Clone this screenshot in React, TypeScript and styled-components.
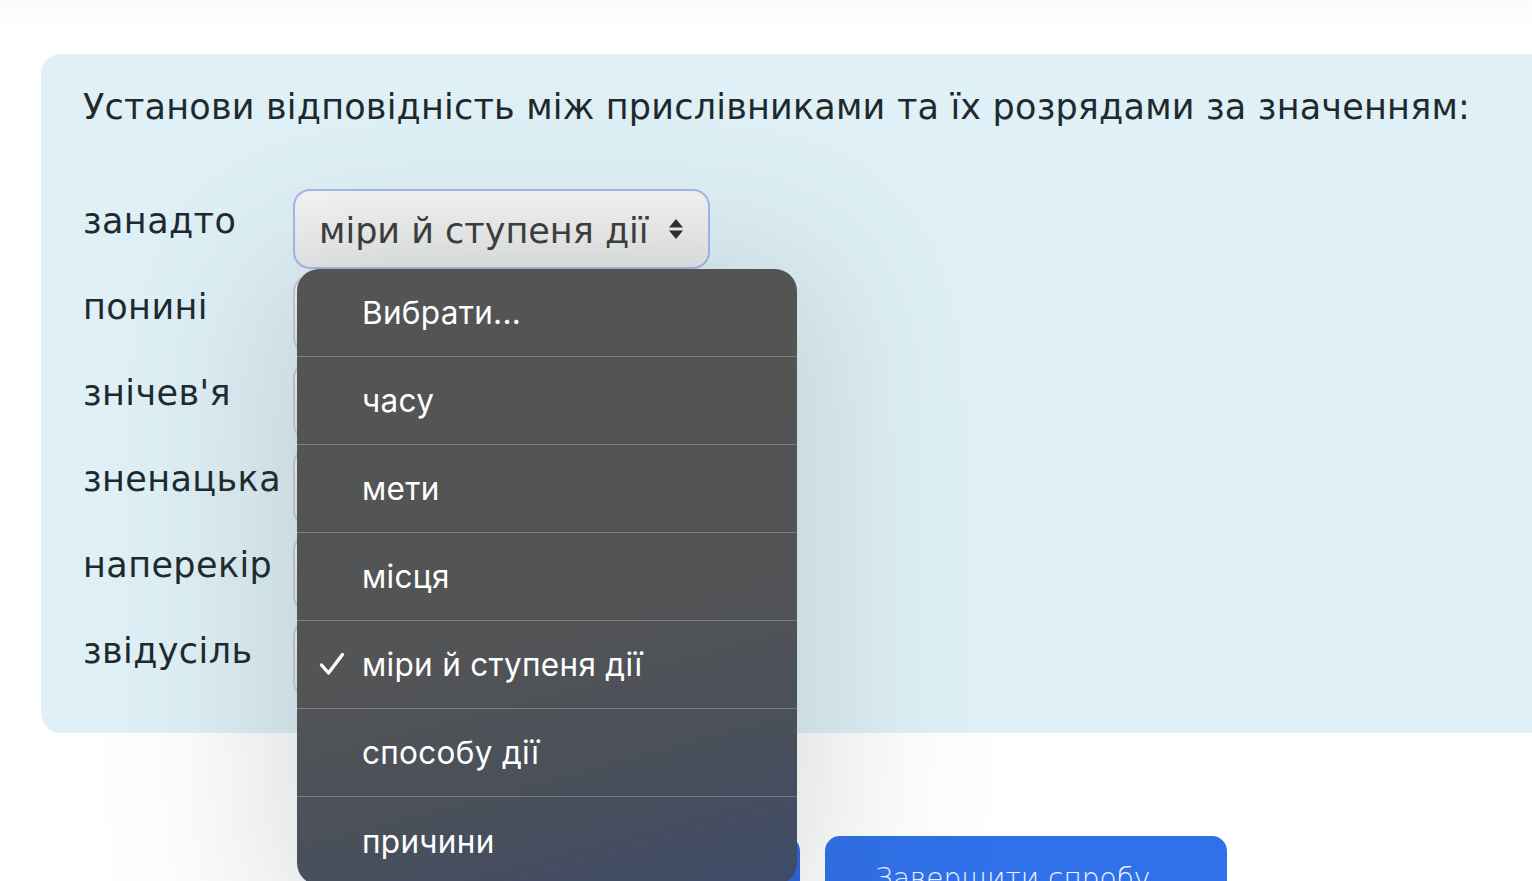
import React from "react";
import styled, { createGlobalStyle } from "styled-components";

const Global = createGlobalStyle`
  html, body { margin: 0; padding: 0; background: #ffffff; }
  body { width: 1532px; height: 881px; overflow: hidden; }
  #root { width: 1532px; height: 881px; overflow: hidden; }
`;

const Page = styled.div`
  position: relative;
  width: 1532px;
  height: 881px;
  overflow: hidden;
  padding: 54px 0 0 41px;
  box-sizing: border-box;
  font-family: "DejaVu Sans", "Open Sans", sans-serif;
  background: linear-gradient(180deg, #fbfbfb 0px, #ffffff 30px);
`;

const Card = styled.section`
  width: 1540px;
  height: 679px;
  box-sizing: border-box;
  background: #dff1f7;
  border-radius: 20px 0 0 20px;
  padding: 31px 0 0 42px;
  display: flex;
  flex-direction: column;
`;

const Title = styled.h2`
  margin: 0;
  font-weight: 400;
  font-size: 35px;
  line-height: 44px;
  color: #1f2a2e;
  letter-spacing: 0.2px;
  white-space: nowrap;
`;

const Rows = styled.div`
  margin-top: 60px;
  display: flex;
  flex-direction: column;
  gap: 6px;
`;

const Row = styled.div`
  display: flex;
  align-items: flex-start;
  height: 80px;
`;

const Label = styled.span`
  width: 210px;
  flex: none;
  font-size: 35px;
  line-height: 44px;
  color: #1f2a2e;
  padding-top: 10px;
  white-space: nowrap;
  letter-spacing: 0.4px;
`;

const Select = styled.div<{ $focused?: boolean }>`
  width: 417px;
  height: 80px;
  box-sizing: border-box;
  border-radius: 17px;
  border: 2px solid ${(p) => (p.$focused ? "#a7b8ea" : "#c9cfd2")};
  background: linear-gradient(180deg, #f6f6f6 0%, #e9e9e9 100%);
  display: flex;
  align-items: center;
  justify-content: space-between;
  padding: 0 24px 0 24px;
  color: #3d3d3d;
  font-size: 35px;
  white-space: nowrap;
`;

const SelectText = styled.span`
  padding-top: 4px;
`;

const Menu = styled.ul`
  position: absolute;
  left: 297px;
  top: 269px;
  width: 500px;
  margin: 0;
  padding: 0;
  list-style: none;
  border-radius: 22px;
  overflow: hidden;
  background: linear-gradient(165deg, #545454 0%, #535455 55%, #4a505a 78%, #3e4a68 100%);
  box-shadow: 0 20px 160px 40px rgba(60, 70, 80, 0.17);
  font-family: Inter, Roboto, sans-serif;
  z-index: 5;
`;

const Item = styled.li`
  height: 88px;
  box-sizing: border-box;
  border-bottom: 1px solid rgba(200, 200, 200, 0.35);
  display: flex;
  align-items: center;
  padding-left: 65px;
  position: relative;
  color: #ffffff;
  font-size: 31.5px;
  letter-spacing: 0.3px;
  &:last-child { border-bottom: none; }
`;

const Check = styled.svg`
  position: absolute;
  left: 22px;
  top: 31px;
`;

const Buttons = styled.div`
  margin-top: 103px;
  display: flex;
  gap: 25px;
  padding-left: 379px;
`;

const Button = styled.button<{ $tone: string; $w: number }>`
  width: ${(p) => p.$w}px;
  height: 72px;
  border: none;
  border-radius: 15px;
  background: ${(p) => p.$tone};
  color: #eef3ff;
  font-family: "DejaVu Sans", "Open Sans", sans-serif;
  font-size: 28px;
  font-weight: 300;
  padding: 26px 0 0 0;
  display: flex;
  justify-content: center;
  align-items: flex-start;
  white-space: nowrap;
`;

function Arrows() {
  return (
    <svg width="16" height="22" viewBox="0 0 16 22">
      <path d="M8 1 L15 9.5 H1 Z" fill="#2e2e2e" />
      <path d="M8 21 L15 12.5 H1 Z" fill="#2e2e2e" />
    </svg>
  );
}

const rows = ["занадто", "понині", "знічев'я", "зненацька", "наперекір", "звідусіль"];
const options = ["Вибрати...", "часу", "мети", "місця", "міри й ступеня дії", "способу дії", "причини"];

export default function App() {
  return (
    <>
      <Global />
      <Page>
        <Card>
          <Title>Установи відповідність між прислівниками та їх розрядами за значенням:</Title>
          <Rows>
            {rows.map((r, i) => (
              <Row key={r}>
                <Label>{r}</Label>
                <Select $focused={i === 0}>
                  {i === 0 && <SelectText>міри й ступеня дії</SelectText>}
                  {i === 0 && <Arrows />}
                </Select>
              </Row>
            ))}
          </Rows>
        </Card>
        <Buttons>
          <Button $tone="#2d64dc" $w={380} aria-label="Попередня сторінка" />
          <Button $tone="#3070ea" $w={402}>Завершити спробу...</Button>
        </Buttons>
        <Menu>
          {options.map((o, i) => (
            <Item key={o}>
              {i === 4 && (
                <Check width="26" height="24" viewBox="0 0 26 24">
                  <path d="M2.5 13 L9.5 21 L23.5 2.5" fill="none" stroke="#fff" strokeWidth="3.4" strokeLinecap="round" strokeLinejoin="round" />
                </Check>
              )}
              {o}
            </Item>
          ))}
        </Menu>
      </Page>
    </>
  );
}
